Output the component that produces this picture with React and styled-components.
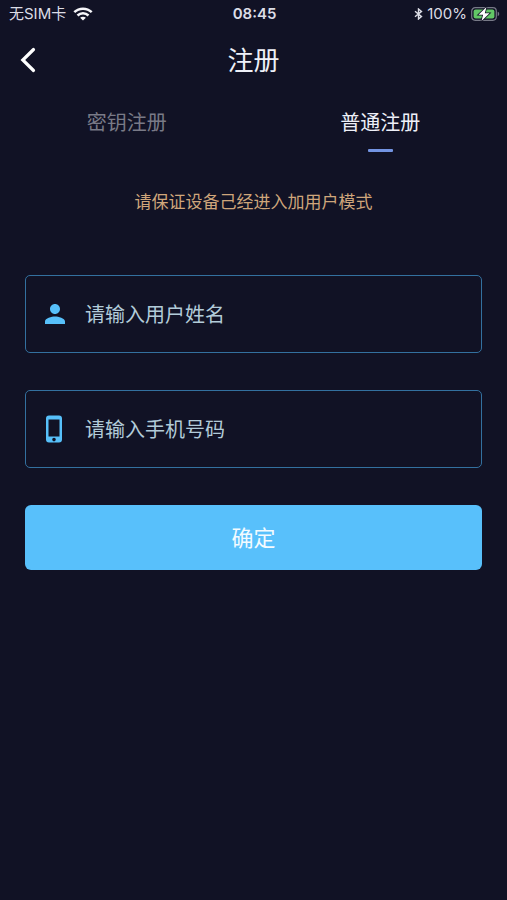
import React, { useState } from "react";
import styled, { createGlobalStyle } from "styled-components";

const GlobalStyle = createGlobalStyle`
  *, *::before, *::after { box-sizing: border-box; }
  body {
    margin: 0;
    background: #111225;
    font-family: Inter, "Noto Sans CJK SC", sans-serif;
  }
  button, input { font: inherit; }
  svg { display: block; flex: none; }
`;

const Screen = styled.div`
  min-height: 100vh;
  background: #111225;
  color: #eef0f8;
`;

const StatusBar = styled.div`
  display: grid;
  grid-template-columns: 1fr auto 1fr;
  align-items: center;
  height: 28px;
  padding: 0 7px 0 9px;
  font-size: 15px;
  line-height: 20px;
  color: #dcdde6;
`;

const StatusGroup = styled.div`
  display: flex;
  align-items: center;
  justify-content: ${(p) => (p.$end ? "flex-end" : "flex-start")};
  gap: ${(p) => (p.$end ? "4px" : "7px")};
`;

const Clock = styled.time`
  font-weight: 600;
`;

const Header = styled.header`
  display: grid;
  grid-template-columns: 56px 1fr 56px;
  align-items: center;
  height: 64px;
`;

const BackButton = styled.button`
  display: flex;
  align-items: center;
  height: 48px;
  padding: 0 0 0 20px;
  border: 0;
  background: none;
  color: #fff;
  cursor: pointer;
`;

const Title = styled.h1`
  margin: 0;
  padding-top: 2px;
  font-size: 26px;
  line-height: 36px;
  font-weight: 400;
  text-align: center;
`;

const Tabs = styled.div`
  display: grid;
  grid-template-columns: 1fr 1fr;
`;

const Tab = styled.button`
  display: flex;
  flex-direction: column;
  align-items: center;
  gap: 12px;
  padding: 17px 0 0;
  border: 0;
  background: none;
  font-size: 20px;
  line-height: 28px;
  font-weight: 400;
  color: ${(p) => (p.$active ? "#eef0f8" : "#797a87")};
  cursor: pointer;

  &::after {
    content: "";
    width: 25px;
    height: 3px;
    border-radius: 1px;
    background: ${(p) => (p.$active ? "#7394e2" : "transparent")};
  }
`;

const Notice = styled.p`
  margin: 38px 0 0;
  font-size: 17px;
  line-height: 24px;
  text-align: center;
  color: #cfa67b;
`;

const Form = styled.form`
  display: flex;
  flex-direction: column;
  gap: 37px;
  padding: 61px 25px 0;
`;

const Field = styled.label`
  display: flex;
  align-items: center;
  gap: 15px;
  height: 78px;
  padding: 0 14px;
  border: 1px solid #33709f;
  border-radius: 5px;
  color: #57c0fa;
`;

const FieldInput = styled.input`
  flex: 1;
  min-width: 0;
  height: 48px;
  padding: 2px 0 0;
  border: 0;
  outline: 0;
  background: none;
  font-size: 20px;
  color: #eef0f8;

  &::placeholder {
    color: #b2cbd9;
    opacity: 1;
  }
`;

const SubmitButton = styled.button`
  height: 65px;
  border: 0;
  border-radius: 6px;
  background: #58c0fb;
  font-size: 22px;
  line-height: 32px;
  color: #f3fbff;
  cursor: pointer;
`;

const WifiIcon = () => (
  <svg width="20" height="14" viewBox="0 0 20 14" fill="none" stroke="#f6f6fa" strokeWidth="2.5" aria-hidden="true">
    <path d="M1.3 5.2C6.2.5 13.800.5 18.700 5.200" />
    <path d="M4.500 8.500C7.600 5.500 12.400 5.500 15.500 8.500" />
    <path d="M10 13.600 7.100 10.800C8.700 9.400 11.300 9.400 12.900 10.800Z" fill="#f6f6fa" stroke="none" />
  </svg>
);

const BluetoothIcon = () => (
  <svg width="9" height="12" viewBox="0 0 9 12" fill="none" stroke="#dcdde6" strokeWidth="1.400" aria-hidden="true">
    <path d="M1 3.200 7.500 8.600 4.500 11V1L7.500 3.400 1 8.800" />
  </svg>
);

const BatteryIcon = () => (
  <svg width="29" height="16" viewBox="0 0 29 16" aria-hidden="true">
    <rect x=".7" y="1.700" width="24.600" height="12.600" rx="3.500" fill="none" stroke="#777987" strokeWidth="1.200" />
    <rect x="2.600" y="3.600" width="20.800" height="8.800" rx="2" fill="#62c866" />
    <path d="M26.700 5.800c2 .6 2 3.800 0 4.400z" fill="#777987" />
    <path d="M15.500 1 7.500 8.800h4.600L10.500 15l8-7.800h-4.700z" fill="#fff" stroke="#111225" strokeWidth="1.600" paintOrder="stroke" />
  </svg>
);

const BackIcon = () => (
  <svg width="16" height="26" viewBox="0 0 16 26" fill="none" stroke="currentColor" strokeWidth="3.200" aria-hidden="true">
    <path d="M13.500 2.500 2.800 13l10.700 10.500" strokeLinecap="round" />
  </svg>
);

const PersonIcon = () => (
  <svg width="30" height="30" viewBox="0 0 24 24" fill="currentColor" aria-hidden="true">
    <path d="M12 12c2.210 0 4-1.790 4-4s-1.790-4-4-4-4 1.790-4 4 1.790 4 4 4zm0 2c-2.670 0-8 1.340-8 4v2h16v-2c0-2.660-5.330-4-8-4z" />
  </svg>
);

const PhoneIcon = () => (
  <svg width="30" height="30" viewBox="0 0 30 30" fill="currentColor" fillRule="evenodd" aria-hidden="true">
    <path d="M9 1.500h10a3 3 0 0 1 3 3v21a3 3 0 0 1-3 3H9a3 3 0 0 1-3-3v-21a3 3 0 0 1 3-3zM8.500 5.500v17h11v-17zM14 23.800a1.800 1.800 0 1 0 0 3.600 1.800 1.800 0 0 0 0-3.600z" />
  </svg>
);

const tabs = [
  { id: "key", label: "密钥注册" },
  { id: "normal", label: "普通注册" },
];

export default function App() {
  const [active, setActive] = useState("normal");

  return (
    <Screen lang="zh-CN">
      <GlobalStyle />
      <StatusBar>
        <StatusGroup>
          <span>无SIM卡</span>
          <WifiIcon />
        </StatusGroup>
        <Clock>08:45</Clock>
        <StatusGroup $end>
          <BluetoothIcon />
          <span>100%</span>
          <BatteryIcon />
        </StatusGroup>
      </StatusBar>
      <Header>
        <BackButton type="button" aria-label="返回">
          <BackIcon />
        </BackButton>
        <Title>注册</Title>
      </Header>
      <Tabs role="tablist">
        {tabs.map((tab) => (
          <Tab
            key={tab.id}
            type="button"
            role="tab"
            aria-selected={active === tab.id}
            $active={active === tab.id}
            onClick={() => setActive(tab.id)}
          >
            {tab.label}
          </Tab>
        ))}
      </Tabs>
      <Notice>请保证设备己经进入加用户模式</Notice>
      <Form onSubmit={(event) => event.preventDefault()}>
        <Field>
          <PersonIcon />
          <FieldInput type="text" name="name" aria-label="用户姓名" placeholder="请输入用户姓名" />
        </Field>
        <Field>
          <PhoneIcon />
          <FieldInput type="tel" name="phone" aria-label="手机号码" placeholder="请输入手机号码" />
        </Field>
        <SubmitButton type="submit">确定</SubmitButton>
      </Form>
    </Screen>
  );
}
